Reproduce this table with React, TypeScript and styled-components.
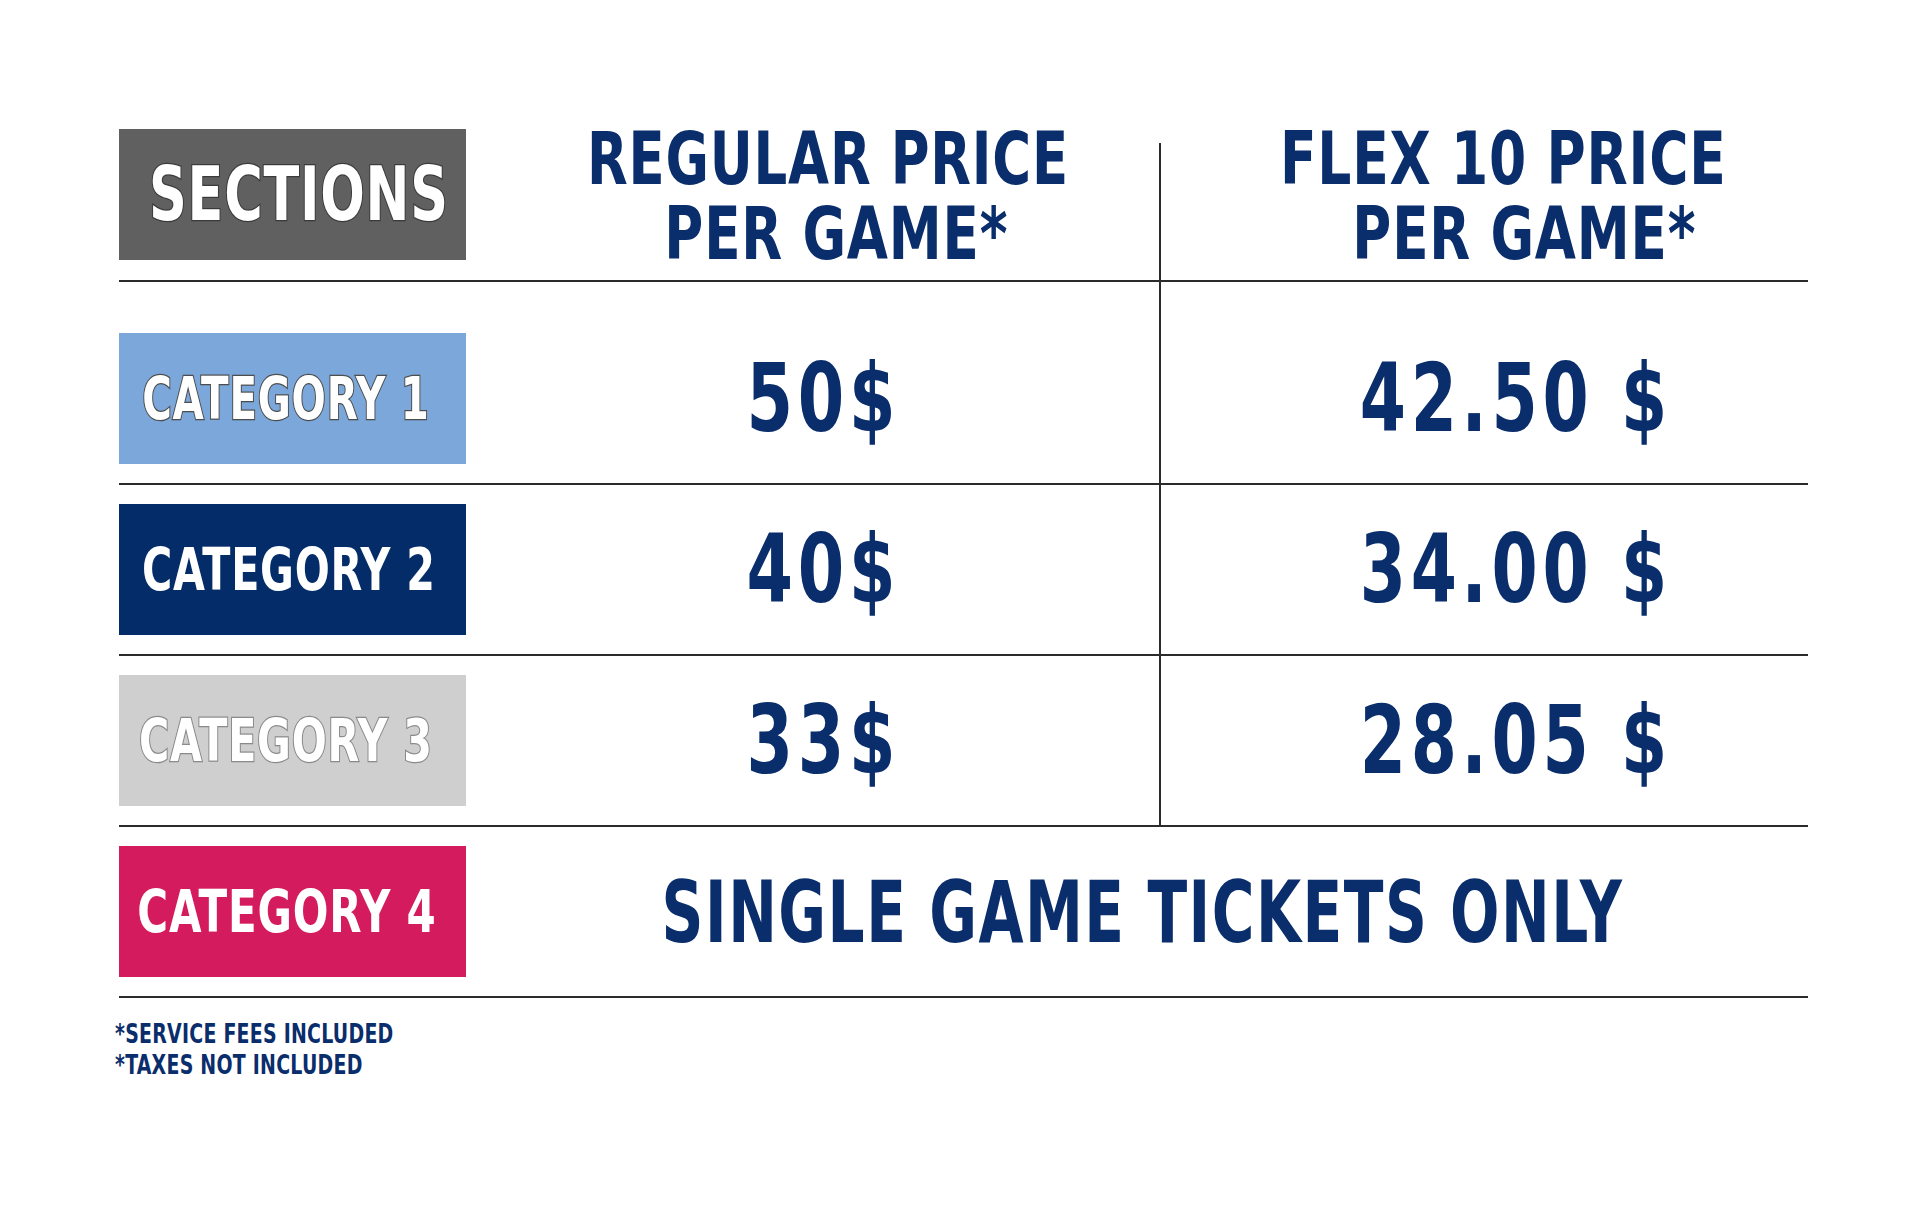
import React from "react";
import styled, { createGlobalStyle } from "styled-components";

const GlobalStyle = createGlobalStyle`
  html, body {
    margin: 0;
    padding: 0;
    background: #ffffff;
  }
  body {
    font-family: "DejaVu Sans Condensed", "DejaVu Sans", sans-serif;
  }
`;

const NAVY = "#0a2d6c";
const RULE = "#2b2b2b";

const Page = styled.div`
  width: 1920px;
  height: 1208px;
  box-sizing: border-box;
  padding: 121px 0 0 115px;
  background: #ffffff;
  font-family: "DejaVu Sans Condensed", "DejaVu Sans", sans-serif;
  font-weight: 700;
`;

const Table = styled.div`
  margin-left: 4px;
  width: 1689px;
  display: flex;
  flex-direction: column;
`;

const Row = styled.div`
  display: grid;
  grid-template-columns: 347px 693px 1fr;
  border-bottom: 2px solid ${RULE};
`;

const Cell = styled.div<{ $top: number; $bottom: number; $divider?: boolean; $shift?: number; $span?: boolean }>`
  box-sizing: border-box;
  padding-top: ${(p) => p.$top}px;
  padding-bottom: ${(p) => p.$bottom}px;
  padding-left: ${(p) => p.$shift ?? 0}px;
  border-left: ${(p) => (p.$divider ? `2px solid ${RULE}` : "none")};
  display: flex;
  align-items: center;
  justify-content: center;
  ${(p) => (p.$span ? "grid-column: 2 / span 2;" : "")}
`;

const HeaderCell = styled.div<{ $divider?: boolean; $shift: number; $gap?: number }>`
  box-sizing: border-box;
  margin-top: ${(p) => p.$gap ?? 0}px;
  padding-left: ${(p) => p.$shift}px;
  border-left: ${(p) => (p.$divider ? `2px solid ${RULE}` : "none")};
  display: flex;
  flex-direction: column;
  align-items: center;
`;

/* Condensed lettering: the poster face is a narrow block font, so the
   installed condensed face is squeezed horizontally around its centre. */
const Squeeze = styled.span<{ $sx: number; $origin?: string }>`
  display: inline-block;
  transform: scaleX(${(p) => p.$sx});
  transform-origin: ${(p) => p.$origin ?? "center"} center;
  white-space: nowrap;
`;

const HeaderLine = styled.span<{ $offset?: number; $up?: number }>`
  display: block;
  margin-top: ${(p) => -(p.$up ?? 0)}px;
  padding-left: ${(p) => p.$offset ?? 0}px;
  font-size: 73px;
  line-height: 75px;
  color: ${NAVY};
  letter-spacing: 1px;
  white-space: nowrap;
`;

const LabelBox = styled.div<{ $bg: string; $stroke?: string; $size: number; $nudge: number }>`
  box-sizing: border-box;
  width: 347px;
  height: 131px;
  background: ${(p) => p.$bg};
  display: flex;
  align-items: center;
  justify-content: center;
  padding-left: ${(p) => Math.max(0, p.$nudge * 2)}px;
  padding-right: ${(p) => Math.max(0, -p.$nudge * 2)}px;
  color: #ffffff;
  font-size: ${(p) => p.$size}px;
  line-height: 1;
  letter-spacing: 1px;
  white-space: nowrap;
  ${(p) =>
    p.$stroke
      ? `-webkit-text-stroke: 2.5px ${p.$stroke}; paint-order: stroke fill;`
      : ""}
`;

const Price = styled.span`
  font-size: 94px;
  line-height: 1;
  color: ${NAVY};
  letter-spacing: 6px;
  white-space: nowrap;
`;

const Single = styled.span`
  font-size: 86px;
  line-height: 1;
  color: ${NAVY};
  letter-spacing: 2px;
  white-space: nowrap;
`;

const Notes = styled.div`
  margin-top: 21px;
  display: flex;
  flex-direction: column;
  align-items: flex-start;
`;

const Note = styled.span`
  font-size: 26px;
  line-height: 31px;
  color: ${NAVY};
  letter-spacing: 0.3px;
  white-space: nowrap;
`;

type Cat = {
  label: string;
  bg: string;
  stroke?: string;
  size: number;
  sx: number;
  nudge: number;
  regular?: string;
  flex?: string;
};

const cats: Cat[] = [
  { label: "CATEGORY 1", bg: "#7ba7da", stroke: "#4d4d4d", size: 58, sx: 0.773, nudge: -7, regular: "50$", flex: "42.50 $" },
  { label: "CATEGORY 2", bg: "#032c69", size: 58, sx: 0.79, nudge: -4, regular: "40$", flex: "34.00 $" },
  { label: "CATEGORY 3", bg: "#cfcfcf", stroke: "#8a8a8a", size: 58, sx: 0.79, nudge: -7, regular: "33$", flex: "28.05 $" },
  { label: "CATEGORY 4", bg: "#d41b5d", size: 58, sx: 0.805, nudge: -6 },
];

export default function App() {
  return (
    <>
      <GlobalStyle />
      <Page>
        <Table>
          <Row>
            <Cell $top={8} $bottom={20}>
              <LabelBox $bg="#606060" $stroke="#3a3a3a" $size={75} $nudge={6}>
                <Squeeze $sx={0.777}>SECTIONS</Squeeze>
              </LabelBox>
            </Cell>
            <HeaderCell $shift={30}>
              <HeaderLine>
                <Squeeze $sx={0.806}>REGULAR PRICE</Squeeze>
              </HeaderLine>
              <HeaderLine $offset={18}>
                <Squeeze $sx={0.81}>PER GAME*</Squeeze>
              </HeaderLine>
            </HeaderCell>
            <HeaderCell $divider $shift={38} $gap={22}>
              <HeaderLine $up={22}>
                <Squeeze $sx={0.814}>FLEX 10 PRICE</Squeeze>
              </HeaderLine>
              <HeaderLine $offset={42}>
                <Squeeze $sx={0.81}>PER GAME*</Squeeze>
              </HeaderLine>
            </HeaderCell>
          </Row>
          {cats.map((c, i) => {
            const top = i === 0 ? 51 : 19;
            return (
              <Row key={c.label}>
                <Cell $top={top} $bottom={19}>
                  <LabelBox $bg={c.bg} $stroke={c.stroke} $size={c.size} $nudge={c.nudge}>
                    <Squeeze $sx={c.sx}>{c.label}</Squeeze>
                  </LabelBox>
                </Cell>
                {c.regular ? (
                  <>
                    <Cell $top={top} $bottom={19} $shift={22}>
                      <Price>
                        <Squeeze $sx={0.79}>{c.regular}</Squeeze>
                      </Price>
                    </Cell>
                    <Cell $top={top} $bottom={19} $divider $shift={62}>
                      <Price>
                        <Squeeze $sx={0.785}>{c.flex}</Squeeze>
                      </Price>
                    </Cell>
                  </>
                ) : (
                  <Cell $top={top} $bottom={19} $span $shift={12}>
                    <Single>
                      <Squeeze $sx={0.752}>SINGLE GAME TICKETS ONLY</Squeeze>
                    </Single>
                  </Cell>
                )}
              </Row>
            );
          })}
        </Table>
        <Notes>
          <Note>
            <Squeeze $sx={0.81} $origin="left">*SERVICE FEES INCLUDED</Squeeze>
          </Note>
          <Note>
            <Squeeze $sx={0.81} $origin="left">*TAXES NOT INCLUDED</Squeeze>
          </Note>
        </Notes>
      </Page>
    </>
  );
}
